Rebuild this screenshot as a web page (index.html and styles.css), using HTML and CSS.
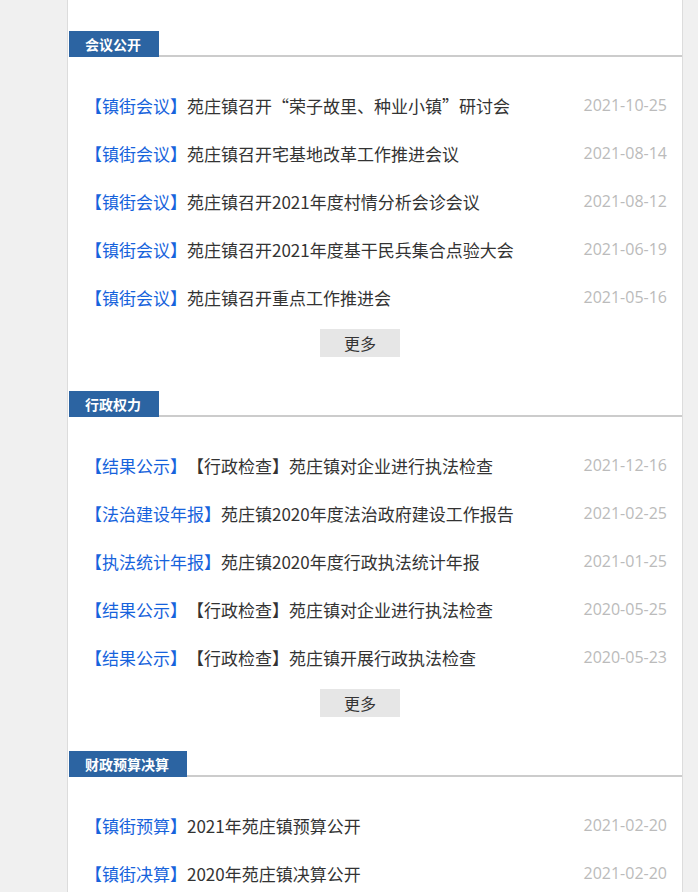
FILE: index.html
```html
<!DOCTYPE html>
<html lang="zh">
<head>
    <meta charset="UTF-8">
    <meta name="viewport" content="width=device-width, initial-scale=1.0">
    <title>镇街信息公开</title>
    <link rel="stylesheet" href="styles.css">
</head>
<body>
    <div class="main">
        <div class="section">
            <div class="section-head">
                <span class="tab">会议公开</span>
                <span class="head-line"></span>
            </div>
            <ul class="list">
                <li><a href="#"><span class="tag">【镇街会议】</span>苑庄镇召开“荣子故里、种业小镇”研讨会</a><span class="date">2021-10-25</span></li>
                <li><a href="#"><span class="tag">【镇街会议】</span>苑庄镇召开宅基地改革工作推进会议</a><span class="date">2021-08-14</span></li>
                <li><a href="#"><span class="tag">【镇街会议】</span>苑庄镇召开2021年度村情分析会诊会议</a><span class="date">2021-08-12</span></li>
                <li><a href="#"><span class="tag">【镇街会议】</span>苑庄镇召开2021年度基干民兵集合点验大会</a><span class="date">2021-06-19</span></li>
                <li><a href="#"><span class="tag">【镇街会议】</span>苑庄镇召开重点工作推进会</a><span class="date">2021-05-16</span></li>
            </ul>
            <a class="more" href="#">更多</a>
        </div>

        <div class="section">
            <div class="section-head">
                <span class="tab">行政权力</span>
                <span class="head-line"></span>
            </div>
            <ul class="list">
                <li><a href="#"><span class="tag">【结果公示】</span>【行政检查】苑庄镇对企业进行执法检查</a><span class="date">2021-12-16</span></li>
                <li><a href="#"><span class="tag">【法治建设年报】</span>苑庄镇2020年度法治政府建设工作报告</a><span class="date">2021-02-25</span></li>
                <li><a href="#"><span class="tag">【执法统计年报】</span>苑庄镇2020年度行政执法统计年报</a><span class="date">2021-01-25</span></li>
                <li><a href="#"><span class="tag">【结果公示】</span>【行政检查】苑庄镇对企业进行执法检查</a><span class="date">2020-05-25</span></li>
                <li><a href="#"><span class="tag">【结果公示】</span>【行政检查】苑庄镇开展行政执法检查</a><span class="date">2020-05-23</span></li>
            </ul>
            <a class="more" href="#">更多</a>
        </div>

        <div class="section">
            <div class="section-head">
                <span class="tab">财政预算决算</span>
                <span class="head-line"></span>
            </div>
            <ul class="list">
                <li><a href="#"><span class="tag">【镇街预算】</span>2021年苑庄镇预算公开</a><span class="date">2021-02-20</span></li>
                <li><a href="#"><span class="tag">【镇街决算】</span>2020年苑庄镇决算公开</a><span class="date">2021-02-20</span></li>
            </ul>
        </div>
    </div>
</body>
</html>
```

FILE: styles.css
```css
body {
    margin: 0;
    background-color: #f0f0f0;
    font-family: "Open Sans", "Noto Sans CJK SC", sans-serif;
    font-size: 16px;
    color: #333;
    text-spacing-trim: space-all;
}
a {
    color: #333;
    text-decoration: none;
}
.main {
    width: 614px;
    min-height: 892px;
    margin-left: 67px;
    padding-top: 31px;
    background: white;
    border-left: 1px solid #dcdcdc;
    border-right: 1px solid #dcdcdc;
    box-sizing: content-box;
}
.section {
    margin-bottom: 34px;
}
.section-head {
    display: flex;
    height: 26px;
    margin-left: 1px;
}
.tab {
    height: 26px;
    line-height: 26px;
    padding: 0 18px 0 16px;
    background-color: #2c64a2;
    color: white;
    font-family: "Noto Sans CJK SC", sans-serif;
    font-size: 14px;
    font-weight: bold;
}
.head-line {
    flex: 1;
    border-bottom: 2px solid #cccccc;
}
.list {
    list-style: none;
    margin: 0;
    padding: 24px 15px 0 17px;
}
.list li {
    display: flex;
    align-items: center;
    height: 48px;
}
.list a {
    font-family: "Noto Sans CJK SC", sans-serif;
    font-size: 17px;
}
.tag {
    color: #1763dc;
}
.date {
    margin-left: auto;
    color: #bbbbbb;
}
.more {
    display: block;
    width: 80px;
    height: 28px;
    line-height: 28px;
    margin: 8px 0 0 252px;
    background-color: #e6e6e6;
    text-align: center;
    font-family: "Noto Sans CJK SC", sans-serif;
}
```
